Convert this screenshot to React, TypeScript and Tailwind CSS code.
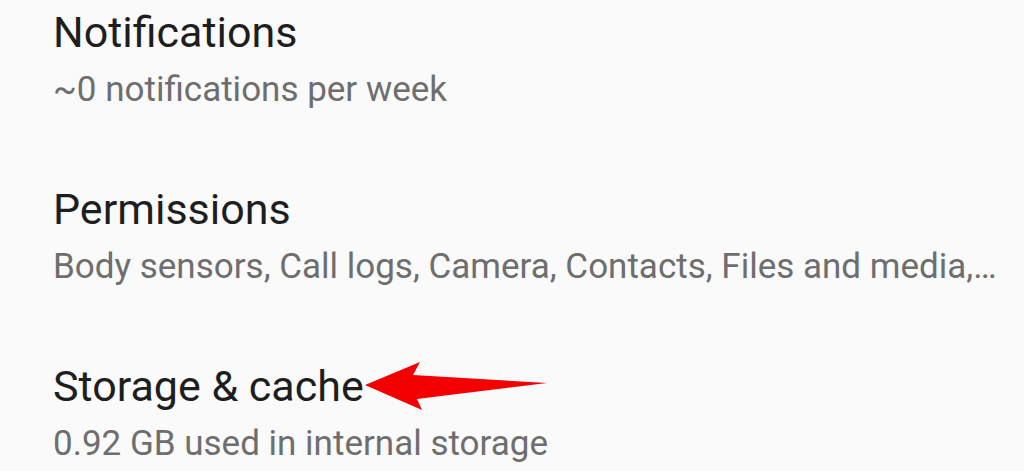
import React from "react";

const rows = [
  { title: "Notifications", sub: "~0 notifications per week" },
  { title: "Permissions", sub: "Body sensors, Call logs, Camera, Contacts, Files and media,\u2026" },
  { title: "Storage & cache", sub: "0.92 GB used in internal storage" },
];

export default function App() {
  return (
    <div
      className="relative w-[1024px] h-[471px] overflow-hidden bg-[#fafafa] pl-[53px] pt-[11px]"
      style={{ fontFamily: "Roboto, 'Noto Sans', sans-serif" }}
    >
      <div className="flex flex-col gap-[81px]">
        {rows.map((r) => (
          <div key={r.title} className="flex flex-col gap-[18px]">
            <div className="text-[43px] leading-[43px] text-[#1e1e1e] whitespace-nowrap">{r.title}</div>
            <div className="text-[35px] leading-[35px] text-[#6e6e6e] whitespace-nowrap">{r.sub}</div>
          </div>
        ))}
      </div>
      <svg
        className="absolute left-0 top-0"
        width="1024"
        height="471"
        viewBox="0 0 1024 471"
      >
        <path
          d="M365 385 L420 362 L413 375 L547 383 L417 399 L422 410 Z"
          fill="#f50000"
        />
      </svg>
    </div>
  );
}
